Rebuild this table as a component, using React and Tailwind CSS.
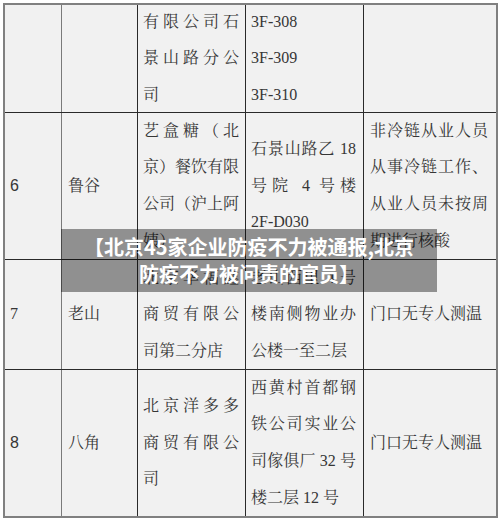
import React from "react";

const serif = "font-['Liberation_Serif','Noto_Serif_CJK_SC','Noto_Sans_CJK_SC',serif]";
const sans = "font-['Liberation_Sans','Noto_Sans_CJK_SC',sans-serif]";

const cols = [
  "w-[57px] pl-[5px] border-r border-[#7a7a7a]",
  "w-[76px] pl-[6px] border-r border-[#2a2a2a]",
  "w-[108px] pl-[5px] pr-[6px] border-r border-[#2a2a2a]",
  "w-[118px] pl-[5px] pr-[7px] border-r border-[#2a2a2a]",
  "w-[132px] pl-[6px] pr-[8px]",
];

// each line: [text, justified]
const rows = [
  {
    h: "h-[108px] border-b border-[#2a2a2a]",
    cells: [
      [],
      [],
      [["有限公司石", true], ["景山路分公", true], ["司", false]],
      [["3F-308", false], ["3F-309", false], ["3F-310", false]],
      [],
    ],
  },
  {
    h: "h-[147px] border-b border-[#2a2a2a]",
    num: "6",
    numFont: sans,
    cells: [
      null,
      [["鲁谷", false]],
      [["艺盒糖（北", true], ["京）餐饮有限", true], ["公司（沪上阿", true], ["姨）", false]],
      [["石景山路乙 18", true], ["号院 4 号楼", true], ["2F-D030", false]],
      [["非冷链从业人员", true], ["从事冷链工作、", true], ["从业人员未按周", true], ["期进行核酸", false]],
    ],
  },
  {
    h: "h-[110px] border-b border-[#2a2a2a]",
    num: "7",
    numFont: serif,
    cells: [
      null,
      [["老山", false]],
      [["北京华福鑫", true], ["商贸有限公", true], ["司第二分店", false]],
      [["老山西里 4 号", true], ["楼南侧物业办", true], ["公楼一至二层", false]],
      [["门口无专人测温", false]],
    ],
  },
  {
    h: "h-[146px]",
    num: "8",
    numFont: sans,
    cells: [
      null,
      [["八角", false]],
      [["北京洋多多", true], ["商贸有限公", true], ["司", false]],
      [["西黄村首都钢", true], ["铁公司实业公", true], ["司傢俱厂 32 号", true], ["楼二层 12 号", false]],
      [["门口无专人测温", false]],
    ],
  },
];

const Cell = ({ col, lines, num, numFont }) => (
  <div className={`${cols[col]} h-full flex flex-col justify-center`}>
    {num ? (
      <div className={`${numFont} text-[16px] leading-[36.6px]`}>{num}</div>
    ) : (
      (lines || []).map(([t, j], i) => (
        <div
          key={i}
          className={`${serif} text-[16px] leading-[36.6px] whitespace-nowrap ${
            j ? "text-justify [text-align-last:justify]" : ""
          }`}
        >
          {t}
        </div>
      ))
    )}
  </div>
);

const App = () => {
  return (
    <div className="relative w-[500px] h-[521px] bg-white overflow-hidden">
      <div className="ml-[3px] mt-[3px] w-[495px] border-2 border-[#808080] bg-[#f1f1f1] text-[#363636]">
        {rows.map((r, ri) => (
          <div key={ri} className={`flex ${r.h}`}>
            {r.cells.map((c, ci) => (
              <Cell
                key={ci}
                col={ci}
                lines={c}
                num={ci === 0 ? r.num : null}
                numFont={r.numFont}
              />
            ))}
          </div>
        ))}
      </div>

      <div className="absolute left-[61px] top-[229px] w-[376px] h-[63px] bg-black/40 flex flex-col items-center justify-center pb-[2px]">
        <div className="font-['Noto_Sans_CJK_SC',sans-serif] font-bold text-white text-[20px] leading-[27px] text-center whitespace-nowrap">
          【北京45家企业防疫不力被通报,北京
        </div>
        <div className="font-['Noto_Sans_CJK_SC',sans-serif] font-bold text-white text-[20px] leading-[27px] text-center whitespace-nowrap">
          防疫不力被问责的官员】
        </div>
      </div>
    </div>
  );
};

export default App;
